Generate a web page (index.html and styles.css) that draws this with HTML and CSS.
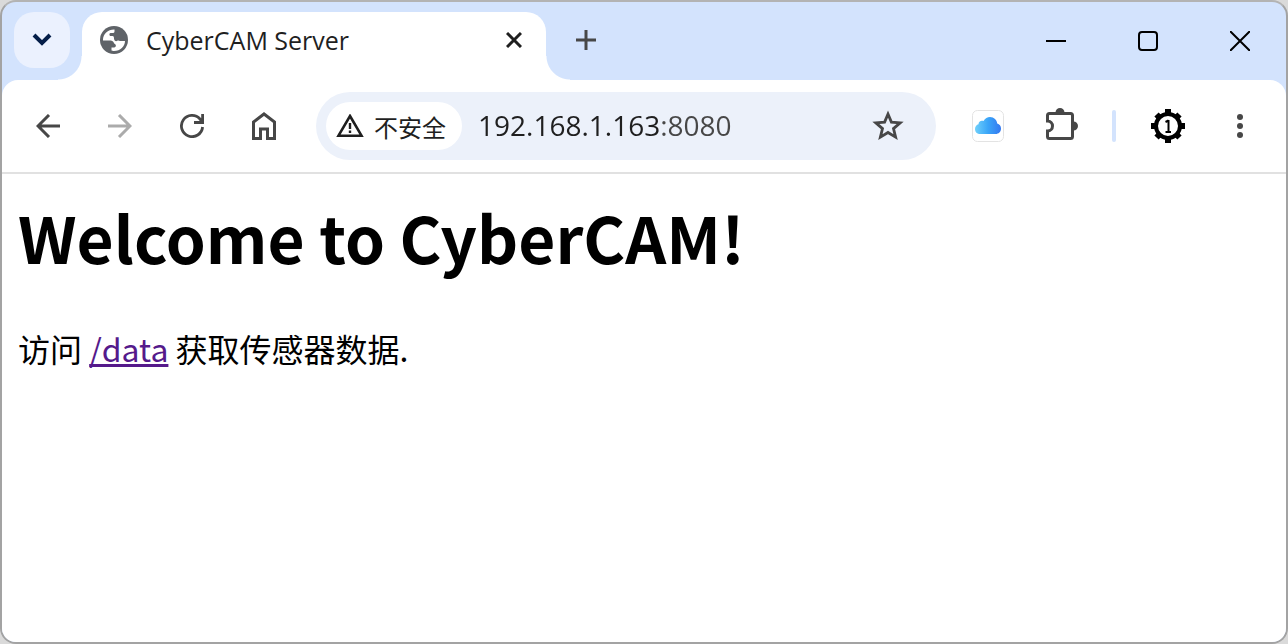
FILE: index.html
```html
<!DOCTYPE html>
<html lang="zh-CN">
<head>
	<meta charset="UTF-8">
	<title>CyberCAM Server</title>
	<meta name="viewport" content="width=device-width, initial-scale=1">
	<link rel="stylesheet" href="styles.css">
</head>
<body>
	<div class="window">
		<header class="tabstrip">
			<button class="tab-search" type="button" aria-label="Search tabs">
				<svg width="20" height="14" viewBox="0 0 20 14"><path d="M2 2l8 8 8-8" fill="none" stroke="#041e49" stroke-width="4"/></svg>
			</button>
			<div class="tab">
				<svg class="favicon" width="28" height="28" viewBox="0 0 28 28">
					<circle cx="14" cy="14" r="14" fill="#5f6368"/>
					<path d="M3 13.500C3 8 8 3.200 14.500 3.400V5.500C14.500 6.500 13.500 7 12.500 7H10.500C9.500 7 9.300 8 9.500 9L10 10H12.500C14 10 14 11.500 14 12.500C14 14.500 15.500 15.500 17 15C18 14.200 19 14.500 20 15H25C25 20.500 20 25.300 13.500 25L11.500 24.500V21.500H14C15.500 21.500 16.500 20 15.500 18.500C14.500 17.500 14 17.500 13.500 16C12.500 14.500 11 14.500 9.500 14.500H3Z" fill="#fff"/>
				</svg>
				<span class="tab-title">CyberCAM Server</span>
				<button class="tab-close" type="button" aria-label="Close tab">
					<svg width="16" height="16" viewBox="0 0 16 16"><path d="M1 1l14 14M15 1L1 15" stroke="#1f1f1f" stroke-width="3"/></svg>
				</button>
			</div>
			<button class="new-tab" type="button" aria-label="New tab">
				<svg width="20" height="20" viewBox="0 0 20 20"><path d="M10 0v20M0 10h20" stroke="#474747" stroke-width="3"/></svg>
			</button>
			<div class="window-controls">
				<button type="button" aria-label="Minimize">
					<svg width="20" height="20" viewBox="0 0 20 20"><path d="M0 10h20" stroke="#000" stroke-width="2"/></svg>
				</button>
				<button type="button" aria-label="Maximize">
					<svg width="20" height="20" viewBox="0 0 20 20"><rect x="1" y="1" width="18" height="18" rx="3" fill="none" stroke="#000" stroke-width="2"/></svg>
				</button>
				<button type="button" aria-label="Close">
					<svg width="20" height="20" viewBox="0 0 20 20"><path d="M0 0l20 20M20 0L0 20" stroke="#000" stroke-width="2"/></svg>
				</button>
			</div>
		</header>

		<nav class="toolbar">
			<button type="button" aria-label="Back">
				<svg width="24" height="24" viewBox="0 0 24 24"><path d="M24 12H2M13 1L2 12l11 11" fill="none" stroke="#474747" stroke-width="3"/></svg>
			</button>
			<button type="button" aria-label="Forward" disabled>
				<svg width="24" height="24" viewBox="0 0 24 24"><path d="M0 12h22M11 1l11 11-11 11" fill="none" stroke="#ababab" stroke-width="3"/></svg>
			</button>
			<button type="button" aria-label="Reload">
				<svg width="24" height="24" viewBox="0 0 24 24"><path d="M22.600 13A10.600 10.600 0 1 1 20 5l2 3M22.600 0v8.500H14" fill="none" stroke="#474747" stroke-width="2.800"/></svg>
			</button>
			<button type="button" aria-label="Home">
				<svg width="24" height="28" viewBox="0 0 24 28"><path d="M1.500 26.500V10L12 2l10.500 8v16.500H15.500V17h-7v9.500z" fill="none" stroke="#474747" stroke-width="3"/></svg>
			</button>

			<form class="omnibox">
				<button class="security" type="button">
					<svg width="28" height="24" viewBox="0 0 28 24"><path d="M14 2L25.500 21.700H2.500z" fill="none" stroke="#1f1f1f" stroke-width="2.600"/><path d="M14 9v6M14 16.500v2.500" stroke="#1f1f1f" stroke-width="2.400"/></svg>
					<span>不安全</span>
				</button>
				<input class="address" type="text" aria-label="Address" value="192.168.1.163:8080">
				<button class="bookmark" type="button" aria-label="Bookmark">
					<svg width="32" height="32" viewBox="0 0 32 32"><path d="M16 4l3.400 8.100 8.800.7-6.700 5.800 2.100 8.500-7.600-4.600-7.600 4.600 2.100-8.500-6.700-5.800 8.800-.7z" fill="none" stroke="#474747" stroke-width="2.800"/></svg>
				</button>
			</form>

			<button type="button" aria-label="iCloud">
				<svg width="32" height="32" viewBox="0 0 32 32">
					<defs>
						<linearGradient id="cloud" x1="0" y1="0" x2="1" y2="0">
							<stop offset="0" stop-color="#6fd0fb"/>
							<stop offset=".5" stop-color="#3aa5f8"/>
							<stop offset="1" stop-color="#3478f0"/>
						</linearGradient>
					</defs>
					<rect x=".5" y=".5" width="31" height="31" rx="5" fill="#fff" stroke="#e3e3e3"/>
					<path d="M8.500 24C5 24 3 22 3 19c0-2.500 1.500-4.300 3.500-4.800C6.500 11.500 9 10 11.500 11 13 8.500 15.500 7 18 7c4 0 7 3 7.200 6.500C27.500 14.200 29 16 29 18.500c0 3.300-2.300 5.500-5.500 5.500z" fill="url(#cloud)"/>
				</svg>
			</button>
			<button type="button" aria-label="Extensions">
				<svg width="36" height="36" viewBox="0 0 36 36">
					<path d="M7.500 5.500h21a2 2 0 0 1 2 2v21a2 2 0 0 1-2 2h-21a2 2 0 0 1-2-2v-5.500c3 0 5-2.200 5-5s-2-5-5-5v-5.500a2 2 0 0 1 2-2z" fill="none" stroke="#474747" stroke-width="3"/>
					<path d="M13.500 4.500a4.500 4.500 0 0 1 9 0zM31.500 13.500a4.500 4.500 0 0 1 0 9z" fill="#474747"/>
				</svg>
			</button>
			<span class="divider"></span>
			<button type="button" aria-label="Profile">
				<svg width="34" height="34" viewBox="0 0 34 34">
					<circle cx="17" cy="17" r="12" fill="#fff" stroke="#000" stroke-width="4"/>
					<g stroke="#000" stroke-width="6">
						<path d="M17 0v5M17 29v5M0 17h5M29 17h5M5.500 5.500l3 3M25.500 25.500l3 3M5.500 28.500l3-3M25.500 8.500l3-3"/>
					</g>
					<path d="M17.500 11v12M14.500 13l3-1.500M14.500 23h5.500" fill="none" stroke="#000" stroke-width="2"/>
				</svg>
			</button>
			<button type="button" aria-label="Menu">
				<svg width="6" height="24" viewBox="0 0 6 24" fill="#474747"><circle cx="3" cy="3" r="3"/><circle cx="3" cy="12" r="3"/><circle cx="3" cy="21" r="3"/></svg>
			</button>
		</nav>

		<main class="page">
			<h1>Welcome to CyberCAM!</h1>
			<p>访问 <a href="/data">/data</a> 获取传感器数据.</p>
		</main>
	</div>
</body>
</html>
```
FILE: styles.css
```css
* {
	box-sizing: border-box;
}

body {
	margin: 0;
	background-color: #dadada;
}

button {
	display: flex;
	flex-shrink: 0;
	align-items: center;
	justify-content: center;
	height: 56px;
	width: 56px;
	padding: 0;
	border: 0;
	border-radius: 28px;
	background: none;
}

.window {
	display: flex;
	flex-direction: column;
	min-height: 100vh;
	overflow: hidden;
	border: 2px solid #a3a3a3;
	border-top-color: #b3b3b3;
	border-radius: 16px;
	background-color: #d3e3fd;
	font-family: 'Open Sans', 'Noto Sans CJK SC', sans-serif;
	color: #1f1f1f;
}

/* tabs */
.tabstrip {
	display: flex;
	align-items: flex-start;
	padding: 10px 0 0 12px;
}

.tab-search {
	margin-right: 12px;
	border-radius: 20px;
	background-color: #ebf1fe;
}

.tab {
	position: relative;
	display: flex;
	flex: 0 1 464px;
	align-items: center;
	height: 68px;
	padding: 0 18px 12px;
	border-radius: 20px 20px 0 0;
	background-color: #fff;
}

.tab::before,
.tab::after {
	content: '';
	position: absolute;
	bottom: 0;
	width: 24px;
	height: 24px;
}

.tab::before {
	right: 100%;
	background: radial-gradient(circle at 0 0, transparent 23px, #fff 24px);
}

.tab::after {
	left: 100%;
	background: radial-gradient(circle at 100% 0, transparent 23px, #fff 24px);
}

.favicon {
	flex-shrink: 0;
}

.tab-title {
	flex: 1;
	margin-left: 18px;
	overflow: hidden;
	white-space: nowrap;
	font-size: 25px;
	line-height: 40px;
}

.tab-close {
	width: 28px;
	height: 28px;
}

.new-tab {
	margin-left: 12px;
}

.window-controls {
	display: flex;
	margin-left: auto;
}

.window-controls button {
	width: 92px;
	height: 58px;
	border-radius: 0;
}

/* toolbar */
.toolbar {
	display: flex;
	align-items: center;
	gap: 16px;
	padding: 12px 18px;
	border-bottom: 2px solid #e1e1e1;
	border-radius: 16px 16px 0 0;
	background-color: #fff;
}

.omnibox {
	display: flex;
	flex: 1;
	align-items: center;
	min-width: 0;
	height: 68px;
	margin: 0 8px;
	padding: 0 20px 0 10px;
	border-radius: 34px;
	background-color: #ecf1fa;
}

.security {
	gap: 10px;
	width: auto;
	height: 48px;
	padding: 0 16px 0 10px;
	border-radius: 24px;
	background-color: #fff;
	font-family: 'Noto Sans CJK SC', sans-serif;
	font-size: 24px;
	color: #1f1f1f;
}

/* host is darker than the port */
.address {
	flex: 1;
	min-width: 0;
	height: 56px;
	margin-left: 16px;
	padding: 0 0 2px;
	border: 0;
	outline: 0;
	background: linear-gradient(90deg, #1f1f1f 184px, #474747 184px) text;
	font-family: inherit;
	font-size: 28px;
	color: transparent;
	caret-color: #1f1f1f;
}

.divider {
	width: 4px;
	height: 32px;
	margin: 0 8px;
	border-radius: 2px;
	background-color: #d3e3fd;
}

/* page */
.page {
	flex: 1;
	padding: 14px 16px;
	background-color: #fff;
	font-family: 'Noto Sans CJK SC', sans-serif;
	font-size: 32px;
	color: #000;
}

h1 {
	margin: 0;
	font-size: 64px;
	line-height: 96px;
}

p {
	margin: 40px 0 0;
	line-height: 48px;
}

a {
	color: #551a8b;
}
```
